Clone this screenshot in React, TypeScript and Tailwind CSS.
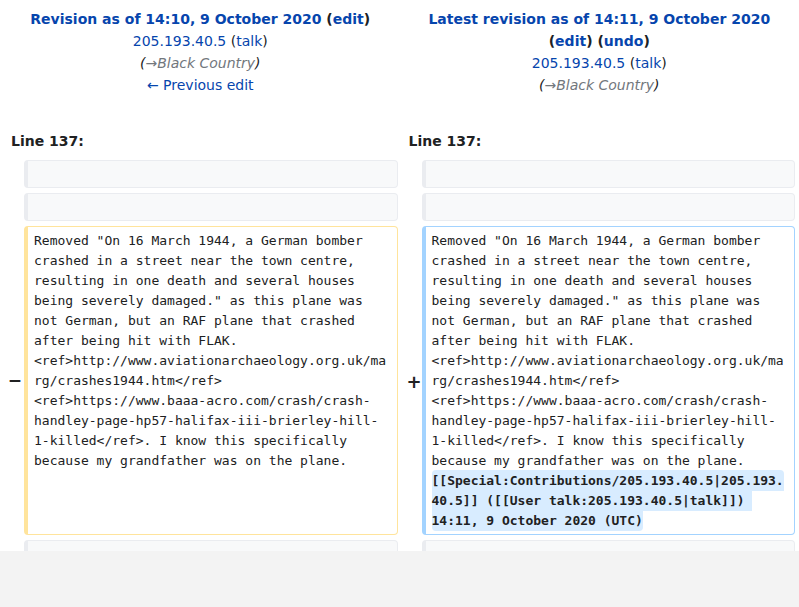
import React from "react";

const sans = { fontFamily: '"DejaVu Sans", "Liberation Sans", sans-serif' };
const mono = { fontFamily: '"DejaVu Sans Mono", "Liberation Mono", monospace' };

const bodyLines = [
    'Removed "On 16 March 1944, a German bomber',
    "crashed in a street near the town centre,",
    "resulting in one death and several houses",
    'being severely damaged." as this plane was',
    "not German, but an RAF plane that crashed",
    "after being hit with FLAK.",
    "<ref>http://www.aviationarchaeology.org.uk/ma",
    "rg/crashes1944.htm</ref>",
    "<ref>https://www.baaa-acro.com/crash/crash-",
    "handley-page-hp57-halifax-iii-brierley-hill-",
    "1-killed</ref>. I know this specifically",
    "because my grandfather was on the plane.",
];

const addedLines = [
    "[[Special:Contributions/205.193.40.5|205.193.",
    "40.5]] ([[User talk:205.193.40.5|talk]]) ",
    "14:11, 9 October 2020 (UTC)",
];

const Link: React.FC<{ children: React.ReactNode }> = ({ children }) => (
    <a className="text-[#0645ad] cursor-pointer">{children}</a>
);

const ContextCell = () => (
    <div className="h-[28px] rounded-[4px] border border-[#eaecf0] border-l-4 bg-[#f8f9fa]" />
);

export default function App() {
    return (
        <div className="w-full bg-[#f3f3f3]" style={sans}>
            <div className="h-[551px] overflow-hidden bg-white text-[#202122]">
                <div className="grid grid-cols-2 pt-[8px] text-[14px] leading-[22px] text-center">
                    <div className="pl-[1px]">
                        <div className="font-bold">
                            <Link>Revision as of 14:10, 9 October 2020</Link> (<Link>edit</Link>)
                        </div>
                        <div>
                            <Link>205.193.40.5</Link> (<Link>talk</Link>)
                        </div>
                        <div className="italic">
                            (<span className="text-[#72777d]">→Black Country</span>)
                        </div>
                        <div>
                            <Link>← Previous edit</Link>
                        </div>
                    </div>
                    <div>
                        <div className="font-bold">
                            <Link>Latest revision as of 14:11, 9 October 2020</Link>
                        </div>
                        <div className="font-bold">
                            (<Link>edit</Link>) (<Link>undo</Link>)
                        </div>
                        <div>
                            <Link>205.193.40.5</Link> (<Link>talk</Link>)
                        </div>
                        <div className="italic">
                            (<span className="text-[#72777d]">→Black Country</span>)
                        </div>
                    </div>
                </div>

                <div className="grid grid-cols-2 mt-[34px] text-[14px] font-bold leading-[22px]">
                    <div className="pl-[11px]">Line 137:</div>
                    <div className="pl-[9px]">Line 137:</div>
                </div>

                <div className="grid grid-cols-[24px_1fr_24px_1fr] gap-y-[5px] pr-[4px] mt-[8px]">
                    <div />
                    <ContextCell />
                    <div />
                    <ContextCell />

                    <div />
                    <ContextCell />
                    <div />
                    <ContextCell />

                    <div className="flex items-center justify-end pr-[2px] pt-[1px] text-[17px] font-bold">−</div>
                    <div
                        className="rounded-[4px] border border-[#ffe49c] border-l-4 bg-white pt-[4px] pb-[3px] px-[6px] text-[13px] leading-[20px] whitespace-pre"
                        style={mono}
                    >
                        {bodyLines.map((line, i) => (
                            <div key={i}>{line}</div>
                        ))}
                    </div>
                    <div className="flex items-center justify-end pt-[1px] text-[18px] font-bold">+</div>
                    <div
                        className="rounded-[4px] border border-[#a3d3ff] border-l-4 bg-white pt-[4px] pb-[3px] px-[6px] text-[13px] leading-[20px] whitespace-pre"
                        style={mono}
                    >
                        {bodyLines.map((line, i) => (
                            <div key={i}>{line}</div>
                        ))}
                        {addedLines.map((line, i) => (
                            <div key={"a" + i}>
                                <span
                                    className={`bg-[#d8ecff] font-bold py-[3px] ${
                                        i === 0 ? "rounded-t-[4px]" : i === 2 ? "rounded-b-[4px]" : ""
                                    }`}
                                >
                                    {line}
                                </span>
                            </div>
                        ))}
                    </div>

                    <div />
                    <ContextCell />
                    <div />
                    <ContextCell />
                </div>
            </div>
            <div className="h-[56px] bg-[#f3f3f3]" />
        </div>
    );
}
